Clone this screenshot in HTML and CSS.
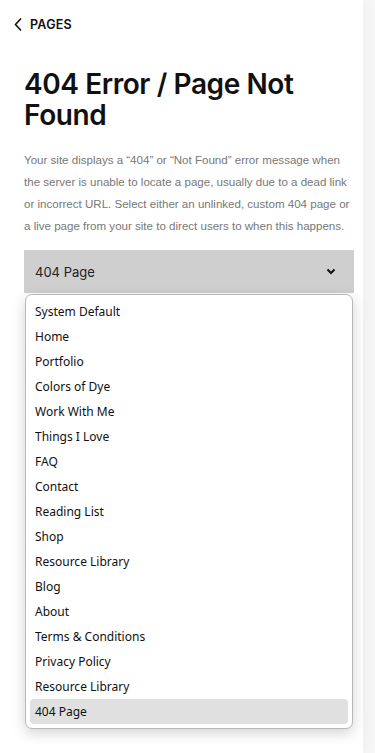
FILE: index.html
```html
<!DOCTYPE html>
<html>
<head>
<meta charset="utf-8">
<link rel="stylesheet" href="styles.css">
<title>404 Error / Page Not Found</title>
</head>
<body>
<div class="panel">
  <div class="back">
    <svg class="back-icon" width="10" height="15" viewBox="0 0 10 15"><path d="M8 1.5 L2.5 7.5 L8 13.5" fill="none" stroke="#111" stroke-width="1.6"/></svg>
    <span class="back-label">PAGES</span>
  </div>
  <h1 class="title">404 Error / Page Not Found</h1>
  <p class="desc">Your site displays a &ldquo;404&rdquo; or &ldquo;Not Found&rdquo; error message when the server is unable to locate a page, usually due to a dead link or incorrect URL. Select either an unlinked, custom 404 page or a live page from your site to direct users to when this happens.</p>
  <div class="select">
    <span class="select-value">404 Page</span>
    <svg class="select-icon" width="10" height="7" viewBox="0 0 10 7"><path d="M1.5 1.5 L5 5 L8.5 1.5" fill="none" stroke="#111" stroke-width="2"/></svg>
  </div>
  <ul class="options">
    <li>System Default</li>
    <li>Home</li>
    <li>Portfolio</li>
    <li>Colors of Dye</li>
    <li>Work With Me</li>
    <li>Things I Love</li>
    <li>FAQ</li>
    <li>Contact</li>
    <li>Reading List</li>
    <li>Shop</li>
    <li>Resource Library</li>
    <li>Blog</li>
    <li>About</li>
    <li>Terms &amp; Conditions</li>
    <li>Privacy Policy</li>
    <li>Resource Library</li>
    <li class="selected">404 Page</li>
  </ul>
</div>
</body>
</html>
```
FILE: styles.css
```css
html {
  background: #f6f6f6;
}
body {
  margin: 0;
  font-family: Inter, "Noto Sans", sans-serif;
  color: #111;
}
.panel {
  width: 363px;
  min-height: 753px;
  background: white;
  box-shadow: 3px 0 10px rgba(0, 0, 0, 0.03);
  padding: 0 0 0 24px;
  box-sizing: border-box;
}
.back {
  display: flex;
  align-items: center;
  gap: 7px;
  margin-left: -11px;
  padding-top: 17px;
  height: 15px;
}
.back-label {
  font-size: 12.5px;
  font-weight: 600;
  letter-spacing: 0.02em;
}
.title {
  margin: 37px 0 0 0;
  font-size: 28px;
  line-height: 31px;
  font-weight: 600;
  letter-spacing: -0.015em;
  width: 320px;
}
.desc {
  margin: 18px 0 0 0;
  width: 331px;
  font-family: "Liberation Sans", Arial, sans-serif;
  font-size: 11.55px;
  line-height: 22px;
  color: #777;
}
.select {
  margin-top: 13px;
  width: 330px;
  height: 43px;
  background: #cfcfcf;
  display: flex;
  align-items: center;
  justify-content: space-between;
  padding: 0 18px 0 11px;
  box-sizing: border-box;
}
.select-value {
  font-size: 13px;
  color: #222;
}
.options {
  list-style: none;
  margin: 1px 0 0 1px;
  padding: 4px 4px;
  width: 328px;
  box-sizing: border-box;
  background: white;
  border: 1px solid #b8b8b8;
  border-radius: 7px;
  box-shadow: 0 4px 14px rgba(0, 0, 0, 0.18);
  font-family: "Noto Sans", "Open Sans", sans-serif;
  font-size: 12px;
  color: #111;
}
.options li {
  height: 25px;
  line-height: 25px;
  padding-left: 5px;
  border-radius: 4px;
}
.options li.selected {
  background: #e0e0e0;
}
```
